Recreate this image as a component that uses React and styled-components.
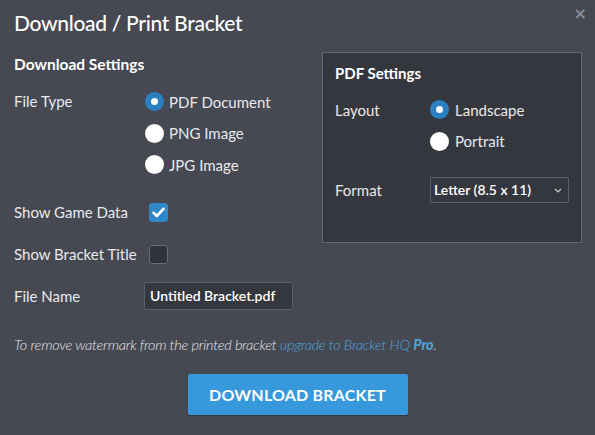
import React from "react";
import styled, { createGlobalStyle } from "styled-components";

const Global = createGlobalStyle`
  html, body { margin: 0; padding: 0; background: #464852; }
  body { font-family: "Lato", "Noto Sans", sans-serif; }
  * { box-sizing: border-box; }
`;

const Modal = styled.div`
  position: relative;
  width: 595px;
  height: 435px;
  background: #464852;
  color: #e9e9eb;
  padding: 8px 14px 0 14px;
  font-size: 15px;
`;

const Title = styled.h1`
  margin: 0;
  font-size: 21px;
  letter-spacing: -0.3px;
  line-height: 30px;
  font-weight: 500;
  color: #ffffff;
`;

const Close = styled.button`
  position: absolute;
  top: 4px;
  right: 8px;
  border: 0;
  background: none;
  color: #8b8d94;
  font-size: 16px;
  line-height: 20px;
  padding: 0;
  font-family: "DejaVu Sans", sans-serif;
  font-weight: bold;
`;

const Columns = styled.div`
  display: flex;
  align-items: flex-start;
  justify-content: space-between;
  margin-top: 14px;
`;

const LeftCol = styled.div`
  width: 300px;
  padding-top: 2px;
`;

const SectionHead = styled.h2`
  margin: 0;
  font-size: ${(p) => p.$size || 15}px;
  line-height: 20px;
  font-weight: 700;
  color: #ffffff;
`;

const Row = styled.div`
  display: flex;
  align-items: ${(p) => (p.$top ? "flex-start" : "center")};
  margin-top: ${(p) => p.$mt || 0}px;
  min-height: ${(p) => p.$h || 32}px;
`;

const Label = styled.div`
  width: ${(p) => p.$w}px;
  flex-shrink: 0;
  line-height: ${(p) => (p.$lh ? p.$lh + "px" : "20px")};
  padding-top: ${(p) => p.$pt || 0}px;
  color: #e9e9eb;
`;

const RadioGroup = styled.div`
  display: flex;
  flex-direction: column;
`;

const RadioItem = styled.label`
  display: flex;
  align-items: center;
  height: 31.5px;
  gap: ${(p) => p.$gap || 5}px;
  color: #e9e9eb;
`;

const RadioDot = styled.span`
  width: 19px;
  height: 19px;
  border-radius: 50%;
  background: ${(p) => (p.$on ? "#2b80c2" : "#ffffff")};
  display: flex;
  align-items: center;
  justify-content: center;
  &::after {
    content: "";
    width: 7px;
    height: 7px;
    border-radius: 50%;
    background: #ffffff;
    display: ${(p) => (p.$on ? "block" : "none")};
  }
`;

const Check = styled.span`
  width: 19px;
  height: 19px;
  margin-left: 4px;
  border-radius: 3px;
  background: ${(p) => (p.$on ? "#2f86c8" : "#31333b")};
  border: 1px solid ${(p) => (p.$on ? "#2f86c8" : "#6b6d75")};
  display: flex;
  align-items: center;
  justify-content: center;
`;

const TextInput = styled.div`
  width: 149px;
  height: 28px;
  background: #35373e;
  border: 1px solid #5d5f66;
  border-radius: 1px;
  color: #ffffff;
  font-weight: 600;
  font-size: 14px;
  line-height: 26px;
  padding-left: 5px;
  white-space: nowrap;
  overflow: hidden;
`;

const Note = styled.p`
  margin: 23px 0 0 0;
  line-height: 20px;
  font-size: 14.5px;
  font-style: italic;
  font-weight: 300;
  letter-spacing: -0.25px;
  color: #e6e6e8;
`;

const Link = styled.a`
  color: #4ea3dc;
  text-decoration: none;
  b { font-weight: 700; }
`;

const Footer = styled.div`
  display: flex;
  justify-content: center;
  margin-top: 19px;
`;

const Button = styled.button`
  width: 220px;
  height: 41px;
  border: 0;
  border-radius: 2px;
  background: #3799dc;
  color: #ffffff;
  font-family: inherit;
  font-weight: 700;
  font-size: 16px;
  letter-spacing: 0.2px;
  box-shadow: 0 1px 1px rgba(0, 0, 0, 0.25);
`;

const Panel = styled.div`
  width: 260px;
  background: #35373e;
  border: 1px solid #66686f;
  padding: 10px 12px 39px 12px;
  margin-right: -1px;
`;

const Select = styled.div`
  width: 139px;
  height: 26px;
  background: #35373e;
  border: 1px solid #5d5f66;
  border-radius: 1px;
  color: #ffffff;
  font-weight: 600;
  font-size: 14px;
  line-height: 24px;
  padding: 0 6px 0 3px;
  display: flex;
  align-items: center;
  justify-content: space-between;
`;

function Radio({ on, children, gap }) {
  return (
    <RadioItem $gap={gap}>
      <RadioDot $on={on} />
      <span>{children}</span>
    </RadioItem>
  );
}

export default function App() {
  return (
    <>
      <Global />
      <Modal>
        <Title>Download / Print Bracket</Title>
        <Close aria-label="close">×</Close>
        <Columns>
          <LeftCol>
            <SectionHead $size={15.5}>Download Settings</SectionHead>
            <Row $top $mt={12} $h={96}>
              <Label $w={131} $lh={31.5}>File Type</Label>
              <RadioGroup>
                <Radio on>PDF Document</Radio>
                <Radio>PNG Image</Radio>
                <Radio>JPG Image</Radio>
              </RadioGroup>
            </Row>
            <Row $mt={14}>
              <Label $w={131}>Show Game Data</Label>
              <Check $on>
                <svg width="13" height="11" viewBox="0 0 13 11">
                  <path d="M1.5 5.8 L4.8 9 L11.5 1.8" fill="none" stroke="#fff" strokeWidth="2.6" strokeLinecap="round" strokeLinejoin="round" />
                </svg>
              </Check>
            </Row>
            <Row $mt={10}>
              <Label $w={131}>Show Bracket Title</Label>
              <Check />
            </Row>
            <Row $mt={10}>
              <Label $w={130}>File Name</Label>
              <TextInput>Untitled Bracket.pdf</TextInput>
            </Row>
          </LeftCol>
          <Panel>
            <SectionHead>PDF Settings</SectionHead>
            <Row $top $mt={11} $h={63}>
              <Label $w={95} $lh={31.5} $pt={1}>Layout</Label>
              <RadioGroup>
                <Radio on gap={6}>Landscape</Radio>
                <Radio gap={6}>Portrait</Radio>
              </RadioGroup>
            </Row>
            <Row $mt={20} $h={26}>
              <Label $w={95}>Format</Label>
              <Select>
                <span>Letter (8.5 x 11)</span>
                <svg width="8" height="5" viewBox="0 0 8 5">
                  <path d="M1 1 L4 4 L7 1" fill="none" stroke="#d0d0d4" strokeWidth="1.2" />
                </svg>
              </Select>
            </Row>
          </Panel>
        </Columns>
        <Note>
          To remove watermark from the printed bracket{" "}
          <Link href="#">
            upgrade to Bracket HQ <b>Pro</b>
          </Link>
          .
        </Note>
        <Footer>
          <Button>DOWNLOAD BRACKET</Button>
        </Footer>
      </Modal>
    </>
  );
}
